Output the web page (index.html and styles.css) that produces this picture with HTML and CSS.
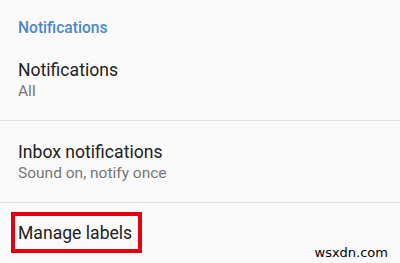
FILE: index.html
```html
<!DOCTYPE html>
<html lang="en">
<head>
    <meta charset="UTF-8">
    <meta name="viewport" content="width=device-width, initial-scale=1.0">
    <title>Settings</title>
    <link rel="stylesheet" href="styles.css">
</head>
<body>
    <div class="settings">
        <div class="section-header">Notifications</div>

        <div class="item">
            <div class="item-title">Notifications</div>
            <div class="item-summary">All</div>
        </div>

        <div class="item">
            <div class="item-title">Inbox notifications</div>
            <div class="item-summary">Sound on, notify once</div>
        </div>

        <div class="item-plain">
            <span class="highlight item-title">Manage labels</span>
        </div>
    </div>

    <div class="watermark">wsxdn.com</div>
</body>
</html>
```

FILE: styles.css
```css
* {
    margin: 0;
    padding: 0;
    box-sizing: border-box;
}
body {
    font-family: Roboto, "Noto Sans", sans-serif;
    background-color: #fafafa;
    color: #212121;
    width: 400px;
    height: 263px;
    overflow: hidden;
    position: relative;
}
.section-header {
    padding: 18px 18px 1px;
    font-size: 15.6px;
    line-height: 20px;
    font-weight: 500;
    color: #4a88cb;
}
.item {
    padding: 20px 18px 19px;
    border-bottom: 1px solid #e2e2e2;
}
.item-title {
    font-size: 17.6px;
    line-height: 22px;
    color: #212121;
}
.item-summary {
    font-size: 15.5px;
    line-height: 20px;
    color: #777;
}
.item-plain {
    padding-top: 9px;
}
/* red annotation box */
.highlight {
    display: inline-block;
    margin-left: 11px;
    border: 4px solid #e3000f;
    padding: 6px 6px 5px 3px;
}
.watermark {
    position: absolute;
    right: 12px;
    bottom: 3px;
    font-family: "DejaVu Sans", Verdana, sans-serif;
    font-size: 13px;
    line-height: 14px;
    color: #000;
}
```
